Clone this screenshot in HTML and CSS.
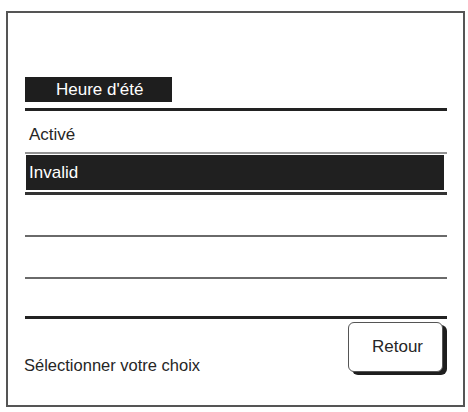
FILE: index.html
```html
<!DOCTYPE html>
<html lang="fr">
<head>
    <meta charset="UTF-8">
    <meta name="viewport" content="width=device-width, initial-scale=1.0">
    <title>Heure d'été</title>
    <link rel="stylesheet" href="styles.css">
</head>
<body>
<div class="screen">
    <div class="title-bar">
        <div class="title">Heure d'été</div>
    </div>
    <ul class="options">
        <li class="option">Activé</li>
        <li class="option selected"><span>Invalid</span></li>
        <li class="option"></li>
        <li class="option"></li>
        <li class="option last"></li>
    </ul>
    <div class="footer">
        <div class="hint">Sélectionner votre choix</div>
        <button class="back-btn">Retour</button>
    </div>
</div>
</body>
</html>
```

FILE: styles.css
```css
/* Ecran de reglage */
body {
    margin: 0;
    background-color: #fff;
    font-family: "Liberation Sans", Arial, sans-serif;
    color: #262626;
}
.screen {
    box-sizing: border-box;
    width: 459px;
    height: 396px;
    margin: 11px 0 0 6px;
    border: 2px solid #555;
    padding: 64px 16px 0 17px;
}
.title-bar {
    border-bottom: 3px solid #222;
    padding-bottom: 6px;
}
.title {
    width: 116px;
    height: 25px;
    padding-left: 31px;
    background-color: #1e1e1e;
    color: #fff;
    font-size: 17px;
    line-height: 26px;
}
.options {
    list-style: none;
    margin: 0;
    padding: 0;
}
.option {
    box-sizing: border-box;
    height: 42px;
    border-bottom: 2px solid #6a6a6a;
    padding-left: 4px;
    font-size: 17px;
    line-height: 40px;
    padding-top: 2px;
}
.option:first-child {
    height: 41px;
    border-bottom: none;
    padding-top: 6px;
    line-height: 35px;
}
.option.selected {
    height: 43px;
    border-top: 2px solid #939393;
    border-bottom: 3px solid #333;
    padding: 1px 3px 2px 1px;
    line-height: 35px;
}
.option.selected span {
    display: block;
    height: 35px;
    padding-left: 3px;
    background-color: #202020;
    color: #fff;
    font-size: 17px;
}
.option.last {
    height: 40px;
    border-bottom: 3px solid #222;
}
.footer {
    display: flex;
    justify-content: space-between;
    align-items: flex-start;
    margin: 3px 4px 0 -1px;
}
.hint {
    margin-top: 33px;
    font-size: 16.5px;
    line-height: 20px;
}
.back-btn {
    box-sizing: border-box;
    width: 95px;
    height: 50px;
    border: 1px solid #555;
    border-radius: 6px;
    background-color: #fff;
    box-shadow: 4px 3px 0 #1e1e1e;
    font-family: "Liberation Sans", Arial, sans-serif;
    font-size: 17px;
    color: #262626;
    padding: 0 0 0 4px;
}
```
